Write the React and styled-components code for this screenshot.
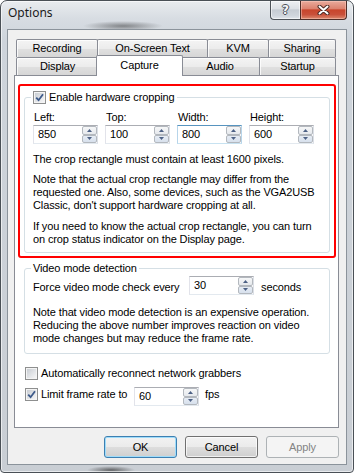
import React from "react";
import styled, { createGlobalStyle, css } from "styled-components";

const GlobalStyle = createGlobalStyle`
  * { box-sizing: border-box; }
  html, body { margin: 0; padding: 0; background: #ffffff; }
  body {
    font-family: "Liberation Sans", Arial, sans-serif;
    font-size: 11px;
    letter-spacing: -0.12px;
    color: #000;
    overflow: hidden;
  }
`;

const Window = styled.div`
  width: 354px;
  height: 473px;
  display: flex;
  flex-direction: column;
  padding: 0 6px 7px;
  border: 1px solid #4a5056;
  border-radius: 7px 7px 4px 4px;
  background:
    radial-gradient(40px 5px at 122px 25px, rgba(30, 30, 30, 0.45), rgba(30, 30, 30, 0)),
    radial-gradient(24px 4px at 110px 469px, rgba(30, 30, 30, 0.6), rgba(30, 30, 30, 0)),
    linear-gradient(180deg, #e9ecef 0px, #d7dce2 18px, #ced4db 40px, #c9ced4 100%);
  box-shadow: inset 0 0 0 1px rgba(255, 255, 255, 0.6);
`;

const TitleBar = styled.div`
  height: 28px;
  display: flex;
  justify-content: space-between;
  align-items: flex-start;
`;

const Title = styled.div`
  padding: 4px 0 0 1px;
  font-family: "Noto Sans", "Open Sans", sans-serif;
  font-size: 12px;
  letter-spacing: 0;
  line-height: 16px;
  color: #1a1a1a;
`;

const TitleButtons = styled.div`
  display: flex;
  height: 19px;
`;

const CaptionButton = styled.div`
  width: ${(p) => p.$w}px;
  height: 19px;
  display: flex;
  align-items: center;
  justify-content: center;
  border: 1px solid ${(p) => (p.$close ? "#4f2e28" : "#4c5258")};
  border-top: none;
  ${(p) =>
    p.$close
      ? css`
          border-radius: 0 0 4px 0;
          background: linear-gradient(180deg, #e9ab9c 0%, #dc8370 42%, #c8452c 50%, #c9503a 75%, #dc8a6f 100%);
          box-shadow: inset 0 0 0 1px rgba(255, 210, 200, 0.45);
        `
      : css`
          border-right: none;
          border-radius: 0 0 0 4px;
          background: linear-gradient(180deg, #eef0f3 0%, #dde1e6 42%, #c6ccd3 50%, #cfd5dc 80%, #dfe4e9 100%);
          box-shadow: inset 0 0 0 1px rgba(255, 255, 255, 0.55);
        `}
`;

const HelpGlyph = styled.span`
  font-family: "DejaVu Sans", sans-serif;
  font-weight: bold;
  font-size: 12px;
  line-height: 12px;
  letter-spacing: 0;
  color: #f4f6f8;
  text-shadow: 1px 0 0 #4a5058, -1px 0 0 #4a5058, 0 1px 0 #4a5058, 0 -1px 0 #4a5058;
`;

const Client = styled.div`
  flex: 1;
  display: flex;
  flex-direction: column;
  background: #f0f0f0;
  border: 1px solid #8b939b;
  padding: 9px 7px 6px 6px;
`;

const TabStrip = styled.div`
  position: relative;
  z-index: 1;
  display: flex;
  flex-direction: column;
  padding-left: 2px;
`;

const TabRow = styled.div`
  display: flex;
  align-items: flex-start;
  height: 18px;
`;

const Tab = styled.div`
  flex: none;
  width: ${(p) => p.$w}px;
  height: 18px;
  margin-left: -1px;
  &:first-child {
    margin-left: 0;
  }
  border: 1px solid #898c95;
  border-bottom: none;
  border-radius: 2px 2px 0 0;
  background: linear-gradient(180deg, #f4f4f4 0%, #ececec 50%, #e0e0e0 52%, #d6d6d6 100%);
  box-shadow: inset 1px 1px 0 rgba(255, 255, 255, 0.8);
  text-align: center;
  line-height: 17px;
  white-space: nowrap;
  ${(p) =>
    p.$active &&
    css`
      position: relative;
      z-index: 2;
      height: 21px;
      margin: -2px -2px 0 -3px;
      &:first-child {
        margin-left: -2px;
      }
      background: #ffffff;
      box-shadow: none;
      padding-top: 1px;
      line-height: 16px;
    `}
`;

const TabPage = styled.div`
  height: 353px;
  background: #ffffff;
  border: 1px solid #898c95;
  padding: 8px 2px 0 3px;
  display: flex;
  flex-direction: column;
`;

const Highlight = styled.div`
  border: 2px solid #ff0000;
  border-radius: 3px;
  padding: 5px 4px 3px 4px;
`;

const Group = styled.fieldset`
  margin: ${(p) => p.$margin || "0"};
  padding: ${(p) => p.$pt}px 8px ${(p) => p.$pb}px 8px;
  border: 1px solid #d5dfe5;
  border-radius: 3px;
  min-width: 0;
`;

const Legend = styled.legend`
  display: flex;
  align-items: center;
  gap: 3px;
  margin-left: -2px;
  padding: 0 2px;
  line-height: 13px;
  white-space: nowrap;
`;

const Fields = styled.div`
  display: grid;
  grid-template-columns: repeat(4, 65px);
  column-gap: 7px;
  row-gap: 1px;
`;

const FieldLabel = styled.div`
  line-height: 13px;
  padding-left: 1px;
`;

const Para = styled.p`
  margin: ${(p) => p.$mt}px 0 0;
  line-height: 13px;
  white-space: nowrap;
`;

const InlineRow = styled.div`
  display: flex;
  align-items: flex-start;
  margin: ${(p) => p.$margin || "0"};
`;

const InlineText = styled.span`
  flex: none;
  width: ${(p) => (p.$w ? `${p.$w}px` : "auto")};
  margin: ${(p) => p.$margin || "0"};
  line-height: 13px;
  white-space: nowrap;
`;

const SpinBox = styled.div`
  flex: none;
  width: ${(p) => p.$w || 65}px;
  height: 19px;
  display: flex;
  background: #ffffff;
  border: 1px solid;
  border-color: ${(p) =>
    p.$hot ? "#5794bf #b7d5ea #c7e2f1 #b7d5ea" : "#abadb3 #dbdfe6 #e3e9ef #e2e3ea"};
`;

const SpinValue = styled.span`
  flex: 1;
  padding: 2px 0 0 4px;
  line-height: 13px;
`;

const SpinButtons = styled.div`
  width: 15px;
  display: flex;
  flex-direction: column;
`;

const SpinHalf = styled.div`
  flex: 1;
  display: flex;
  align-items: center;
  justify-content: center;
  border: 1px solid #b3b8be;
  border-radius: 2px;
  background: ${(p) =>
    p.$down
      ? "linear-gradient(180deg, #e7edf5 0%, #d7e0ec 100%)"
      : "linear-gradient(180deg, #f6f7f8 0%, #e6e9ed 100%)"};
`;

const CheckRow = styled.label`
  display: flex;
  align-items: ${(p) => (p.$top ? "flex-start" : "center")};
  gap: 3px;
  margin: ${(p) => p.$margin || "0"};
  line-height: 13px;
  white-space: nowrap;
`;

const Box = styled.span`
  flex: none;
  width: 13px;
  height: 13px;
  margin-top: ${(p) => p.$mt || 0}px;
  border: 1px solid #8e8f8f;
  padding: 1px;
  background: #f4f4f4;
  display: flex;
`;

const BoxInner = styled.span`
  flex: 1;
  display: flex;
  align-items: center;
  justify-content: center;
  background: linear-gradient(135deg, #c9cdd3 0%, #e2e4e7 55%, #f5f5f6 100%);
`;

const ButtonRow = styled.div`
  display: flex;
  justify-content: flex-end;
  gap: 8px;
  margin-top: 8px;
`;

const Button = styled.div`
  width: 73px;
  height: 22px;
  display: flex;
  align-items: center;
  justify-content: center;
  border: 1px solid #707070;
  border-radius: 3px;
  background: linear-gradient(180deg, #f2f2f2 0%, #ebebeb 50%, #dddddd 51%, #cfcfcf 100%);
  box-shadow: inset 0 0 0 1px rgba(255, 255, 255, 0.7);
  ${(p) =>
    p.$default &&
    css`
      border-color: #3c7fb1;
      box-shadow: inset 0 0 0 1px #9fdcfa;
    `}
  ${(p) =>
    p.$disabled &&
    css`
      border-color: #adb2b5;
      background: #f4f4f4;
      box-shadow: none;
      color: #838383;
    `}
`;

function Arrow({ down }) {
  return (
    <svg width="5" height="3" viewBox="0 0 5 3">
      <polygon points={down ? "0,0 5,0 2.5,3" : "0,3 5,3 2.5,0"} fill="#4d6185" />
    </svg>
  );
}

function Spin({ value, w, hot }) {
  return (
    <SpinBox $w={w} $hot={hot}>
      <SpinValue>{value}</SpinValue>
      <SpinButtons>
        <SpinHalf>
          <Arrow />
        </SpinHalf>
        <SpinHalf $down>
          <Arrow down />
        </SpinHalf>
      </SpinButtons>
    </SpinBox>
  );
}

function CheckBox({ checked, mt }) {
  return (
    <Box $mt={mt}>
      <BoxInner>
        {checked && (
          <svg width="9" height="9" viewBox="0 0 9 9">
            <path d="M1.2 4.6 L3.6 7.2 L8 1.2" fill="none" stroke="#3d5a8a" strokeWidth="1.8" />
          </svg>
        )}
      </BoxInner>
    </Box>
  );
}

function CloseGlyph() {
  return (
    <svg width="13" height="10" viewBox="0 0 13 10">
      <path d="M2.5 1.5 L10.5 8.5 M10.5 1.5 L2.5 8.5" stroke="#4a2a24" strokeWidth="4" strokeLinecap="round" />
      <path d="M2.5 1.5 L10.5 8.5 M10.5 1.5 L2.5 8.5" stroke="#ffffff" strokeWidth="2" strokeLinecap="round" />
    </svg>
  );
}

const row1 = [
  { label: "Recording", w: 82 },
  { label: "On-Screen Text", w: 111 },
  { label: "KVM", w: 62 },
  { label: "Sharing", w: 68 },
];

const row2 = [
  { label: "Display", w: 83 },
  { label: "Capture", w: 87, active: true },
  { label: "Audio", w: 80 },
  { label: "Startup", w: 77 },
];

const fields = [
  { label: "Left:", value: "850" },
  { label: "Top:", value: "100" },
  { label: "Width:", value: "800", hot: true },
  { label: "Height:", value: "600" },
];

export default function App() {
  return (
    <>
      <GlobalStyle />
      <Window>
        <TitleBar>
          <Title>Options</Title>
          <TitleButtons>
            <CaptionButton $w={30}>
              <HelpGlyph>?</HelpGlyph>
            </CaptionButton>
            <CaptionButton $w={47} $close>
              <CloseGlyph />
            </CaptionButton>
          </TitleButtons>
        </TitleBar>
        <Client>
          <TabStrip>
            <TabRow>
              {row1.map((t) => (
                <Tab key={t.label} $w={t.w}>
                  {t.label}
                </Tab>
              ))}
            </TabRow>
            <TabRow>
              {row2.map((t) => (
                <Tab key={t.label} $w={t.w} $active={t.active}>
                  {t.label}
                </Tab>
              ))}
            </TabRow>
          </TabStrip>
          <TabPage>
            <Highlight>
              <Group $pt={7} $pb={6}>
                <Legend>
                  <CheckBox checked />
                  Enable hardware cropping
                </Legend>
                <Fields>
                  {fields.map((f) => (
                    <FieldLabel key={f.label}>{f.label}</FieldLabel>
                  ))}
                  {fields.map((f) => (
                    <Spin key={f.label} value={f.value} hot={f.hot} />
                  ))}
                </Fields>
                <Para $mt={9}>The crop rectangle must contain at least 1600 pixels.</Para>
                <Para $mt={7}>
                  Note that the actual crop rectangle may differ from the
                  <br />
                  requested one. Also, some devices, such as the VGA2USB
                  <br />
                  Classic, don't support hardware cropping at all.
                </Para>
                <Para $mt={8}>
                  If you need to know the actual crop rectangle, you can turn
                  <br />
                  on crop status indicator on the Display page.
                </Para>
              </Group>
            </Highlight>
            <Group $pt={1} $pb={8} $margin="4px 6px 0 6px">
              <Legend>Video mode detection</Legend>
              <InlineRow>
                <InlineText $w={156} $margin="5px 0 0 0">
                  Force video mode check every
                </InlineText>
                <Spin value="30" />
                <InlineText $margin="5px 0 0 7px">seconds</InlineText>
              </InlineRow>
              <Para $mt={11}>
                Note that video mode detection is an expensive operation.
                <br />
                Reducing the above number improves reaction on video
                <br />
                mode changes but may reduce the frame rate.
              </Para>
            </Group>
            <CheckRow $margin="13px 0 0 7px">
              <CheckBox />
              Automatically reconnect network grabbers
            </CheckRow>
            <InlineRow $margin="7px 0 0 7px">
              <CheckRow $top>
                <CheckBox checked mt={1} />
                <InlineText $w={93} $margin="1px 0 0 0">
                  Limit frame rate to
                </InlineText>
              </CheckRow>
              <Spin value="60" />
              <InlineText $margin="1px 0 0 6px">fps</InlineText>
            </InlineRow>
          </TabPage>
          <ButtonRow>
            <Button $default>OK</Button>
            <Button>Cancel</Button>
            <Button $disabled>Apply</Button>
          </ButtonRow>
        </Client>
      </Window>
    </>
  );
}
